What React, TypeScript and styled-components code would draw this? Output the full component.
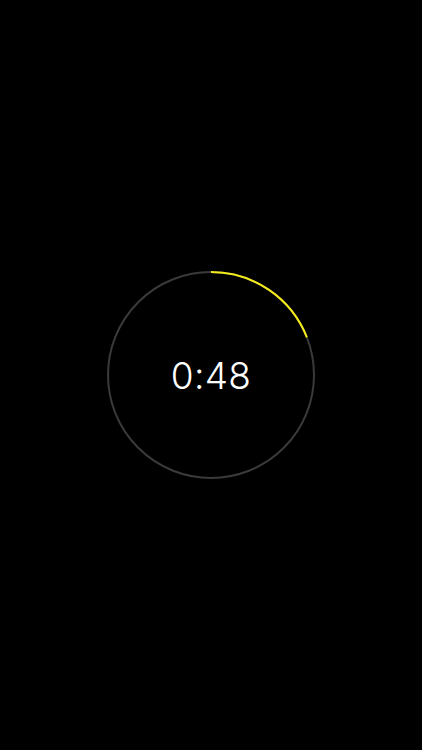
import React from "react";
import styled, { createGlobalStyle } from "styled-components";

const GlobalStyle = createGlobalStyle`
  html, body { margin: 0; padding: 0; background: #000; }
  #root { width: 100%; }
`;

const Screen = styled.div`
  width: 422px;
  height: 750px;
  background: #000;
  display: flex;
  align-items: center;
  justify-content: center;
  padding-bottom: 1px;
  box-sizing: border-box;
`;

const Dial = styled.div`
  display: grid;
  place-items: center;
  width: 210px;
  height: 210px;
  & > * { grid-area: 1 / 1; }
`;

const Time = styled.div`
  font-family: Inter, "Helvetica Neue", "Liberation Sans", sans-serif;
  font-weight: 300;
  font-size: 37px;
  color: #fff;
  letter-spacing: 0.3px;
  line-height: 1;
  padding-top: 2px;
`;

const R = 103;
const C = 2 * Math.PI * R;

const Ring: React.FC<{ progress: number }> = ({ progress }) => (
  <svg width="210" height="210" viewBox="0 0 210 210">
    <circle cx="105" cy="105" r={R} fill="none" stroke="#3a3a3a" strokeWidth="2" />
    <circle
      cx="105"
      cy="105"
      r={R}
      fill="none"
      stroke="#f5ec1c"
      strokeWidth="2"
      strokeDasharray={`${C * progress} ${C}`}
      transform="rotate(-90 105 105)"
    />
  </svg>
);

export default function App() {
  return (
    <>
      <GlobalStyle />
      <Screen>
        <Dial>
          <Ring progress={68.5 / 360} />
          <Time>0:48</Time>
        </Dial>
      </Screen>
    </>
  );
}
